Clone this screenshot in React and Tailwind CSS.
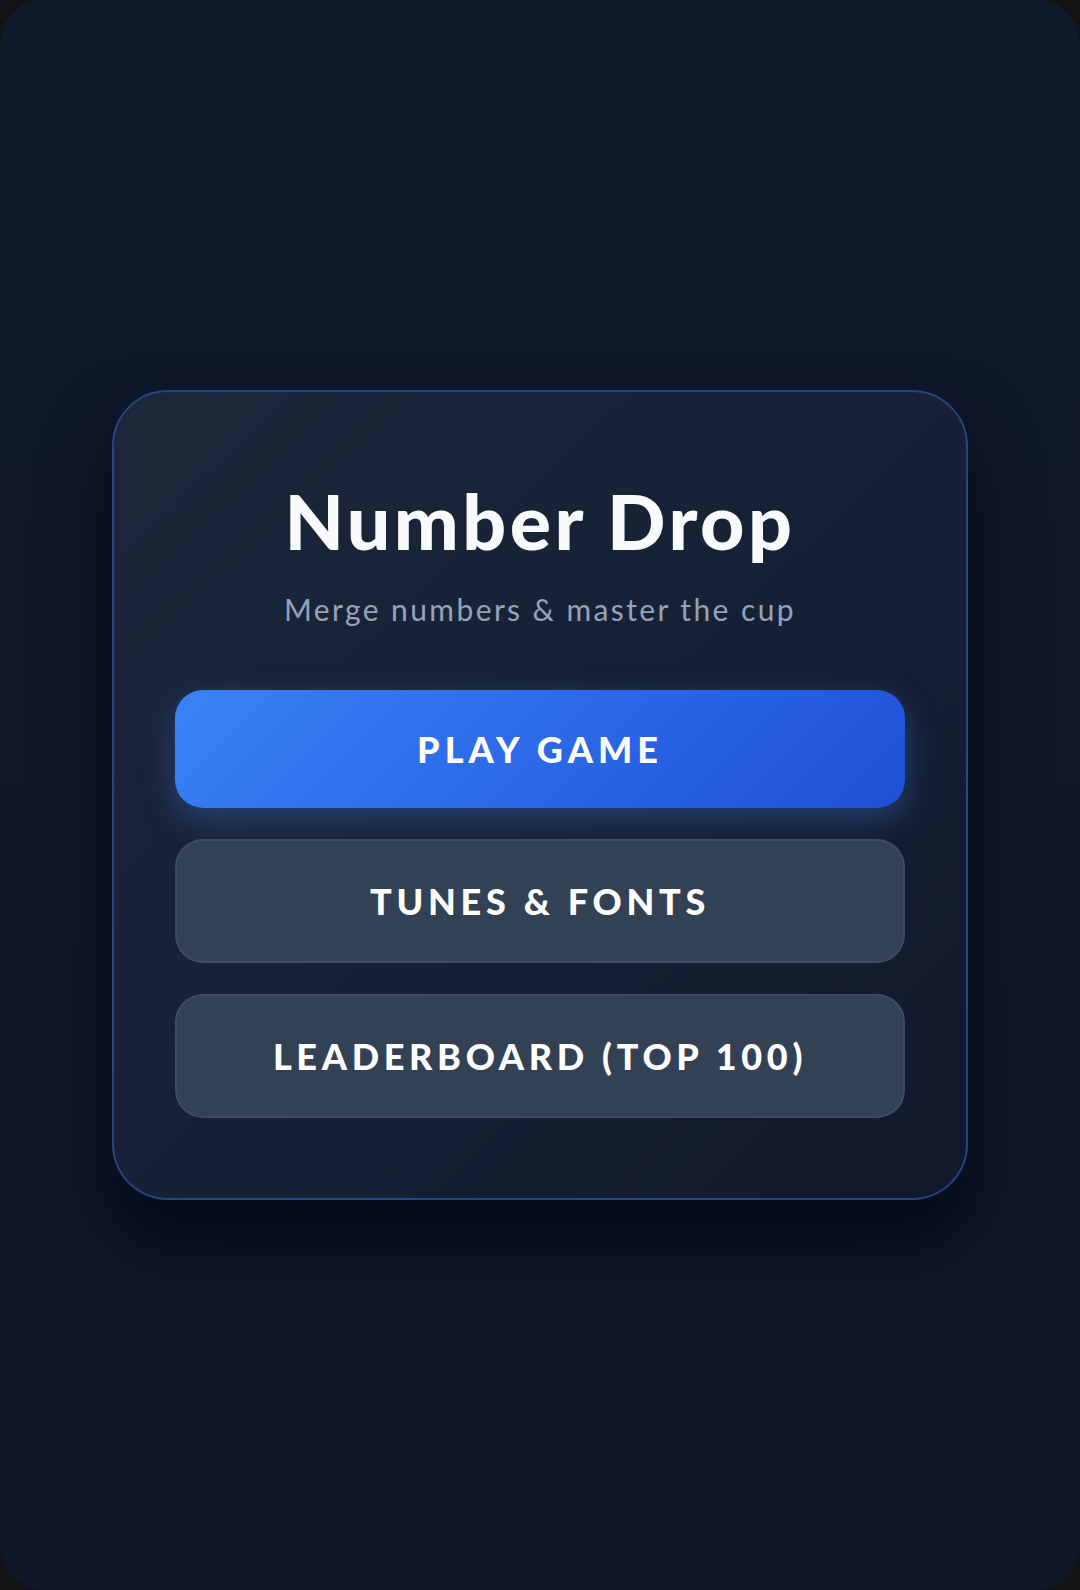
import React from "react";

const MenuButton = ({ children, primary }) => (
  <button
    className={
      primary
        ? "h-[118px] w-full rounded-[28px] bg-linear-135 from-[#3b82f6] to-[#1f4fd8] text-[36px] font-black tracking-[0.14em] text-white shadow-[0_10px_32px_rgba(59,130,246,0.35)]"
        : "h-[124px] w-full rounded-[28px] border-2 border-[#475569]/60 bg-[#334155] text-[36px] font-black tracking-[0.13em] text-white"
    }
  >
    {children}
  </button>
);

const App = () => {
  return (
    <div
      className="h-[1590px] w-[1080px] bg-[#121212]"
      style={{ fontFamily: "Lato, 'Noto Sans', sans-serif" }}
    >
      <div className="flex h-full w-full items-center justify-center rounded-[44px] bg-linear-to-b from-[#0f192c] to-[#0e1628]">
        {/* Menu card */}
        <div className="w-[856px] rounded-[56px] border-2 border-[#27457f] bg-linear-to-br from-[#1d273a] via-[#172135] to-[#111a2c] px-[61px] pb-[80px] pt-[90px] shadow-[0_40px_70px_rgba(2,6,16,0.75)]">
          <h1 className="text-center text-[77px] font-black leading-none tracking-[0.045em] text-[#f8fafc]">
            Number Drop
          </h1>
          <p className="mt-[35px] text-center text-[30px] font-normal leading-none tracking-[0.08em] text-[#94a3b8]">
            Merge numbers &amp; master the cup
          </p>
          <div className="mt-[66px] flex flex-col gap-[31px]">
            <MenuButton primary>PLAY GAME</MenuButton>
            <MenuButton>TUNES &amp; FONTS</MenuButton>
            <MenuButton>LEADERBOARD (TOP 100)</MenuButton>
          </div>
        </div>
      </div>
    </div>
  );
};

export default App;
